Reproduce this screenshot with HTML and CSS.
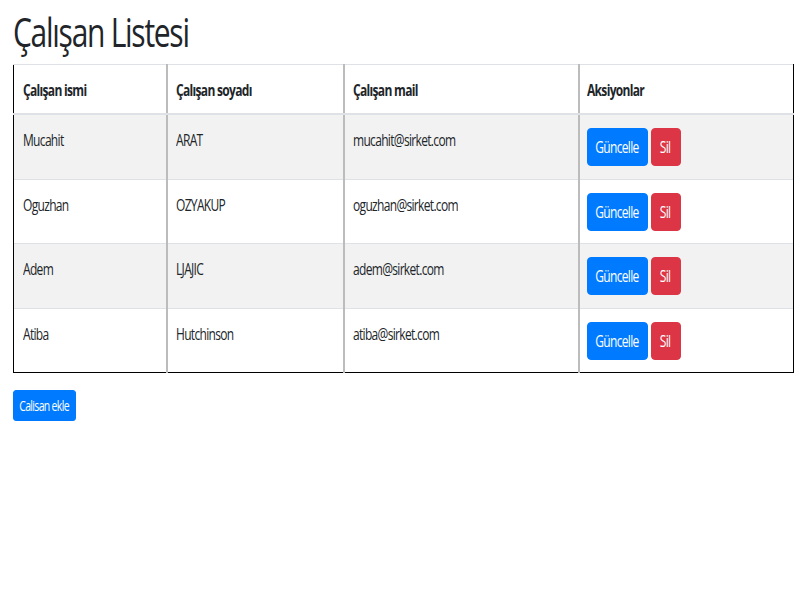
FILE: index.html
```html
<!DOCTYPE html>
<html lang="tr">
<head>
<meta charset="utf-8">
<title>Çalışan Listesi</title>
<link rel="stylesheet" href="styles.css">
</head>
<body>
<div class="page">
  <h1 class="title"><span class="sq">Çalışan Listesi</span></h1>
  <table class="emp-table">
    <colgroup>
      <col class="c1"><col class="c2"><col class="c3"><col class="c4">
    </colgroup>
    <thead>
      <tr><th><span class="sq">Çalışan ismi</span></th><th><span class="sq">Çalışan soyadı</span></th><th><span class="sq">Çalışan mail</span></th><th><span class="sq">Aksiyonlar</span></th></tr>
    </thead>
    <tbody>
      <tr class="odd"><td><span class="sq">Mucahit</span></td><td><span class="sq">ARAT</span></td><td><span class="sq">mucahit@sirket.com</span></td><td><div class="actions"><button class="btn btn-primary btn-update"><span class="sq">Güncelle</span></button><button class="btn btn-danger btn-delete"><span class="sq">Sil</span></button></div></td></tr>
      <tr><td><span class="sq">Oguzhan</span></td><td><span class="sq">OZYAKUP</span></td><td><span class="sq">oguzhan@sirket.com</span></td><td><div class="actions"><button class="btn btn-primary btn-update"><span class="sq">Güncelle</span></button><button class="btn btn-danger btn-delete"><span class="sq">Sil</span></button></div></td></tr>
      <tr class="odd"><td><span class="sq">Adem</span></td><td><span class="sq">LJAJIC</span></td><td><span class="sq">adem@sirket.com</span></td><td><div class="actions"><button class="btn btn-primary btn-update"><span class="sq">Güncelle</span></button><button class="btn btn-danger btn-delete"><span class="sq">Sil</span></button></div></td></tr>
      <tr class="last"><td><span class="sq">Atiba</span></td><td><span class="sq">Hutchinson</span></td><td><span class="sq">atiba@sirket.com</span></td><td><div class="actions"><button class="btn btn-primary btn-update"><span class="sq">Güncelle</span></button><button class="btn btn-danger btn-delete"><span class="sq">Sil</span></button></div></td></tr>
    </tbody>
  </table>
  <button class="btn btn-primary btn-sm btn-add"><span class="sq">Calisan ekle</span></button>
</div>
</body>
</html>
```
FILE: styles.css
```css
html, body {
  margin: 0;
  padding: 0;
  background: #fff;
}
body {
  font-family: "Open Sans", "Liberation Sans", sans-serif;
  color: #212529;
  font-size: 16px;
  line-height: 1.5;
  letter-spacing: -0.9px;
}
/* Text in the reference is horizontally squeezed to 75% */
.sq {
  display: inline-block;
  white-space: nowrap;
  transform: scaleX(0.75);
  transform-origin: 0 50%;
}
.page {
  padding: 8px 7px 0 13px;
}
.title {
  margin: 0 0 8px 0;
  font-size: 40px;
  font-weight: 400;
  line-height: 48px;
  letter-spacing: -1.7px;
}
.emp-table {
  width: 780px;
  table-layout: fixed;
  border-collapse: collapse;
  margin-bottom: 17px;
}
.c1 { width: 153px; }
.c2 { width: 177px; }
.c3 { width: 235px; }
.c4 { width: 215px; }
.emp-table th,
.emp-table td {
  text-align: left;
  vertical-align: top;
  padding: 12px 8px;
  border-top: 1px solid #dee2e6;
  border-left: 2px solid #bcbcbc;
  border-right: 2px solid #bcbcbc;
  border-bottom: 0;
}
.emp-table th {
  font-weight: 700;
  border-bottom: 2px solid #dee2e6;
  padding-top: 13px;
  padding-bottom: 11px;
}
.emp-table td {
  padding-top: 13px;
  padding-bottom: 12.5px;
  height: 38px;
}
.emp-table th:first-child,
.emp-table td:first-child {
  border-left: 1px solid #000;
  padding-left: 9px;
}
.emp-table th:last-child,
.emp-table td:last-child {
  border-right: 1px solid #000;
  padding-left: 7px;
}
.emp-table tr.last td {
  border-bottom: 1px solid #000;
}
.emp-table tr.odd td {
  background: #f2f2f2;
}
.actions {
  display: flex;
  gap: 3px;
}
.btn {
  display: flex;
  justify-content: center;
  align-items: center;
  box-sizing: border-box;
  font-family: inherit;
  font-size: 16px;
  line-height: 24px;
  letter-spacing: -0.9px;
  height: 38px;
  padding: 0;
  border: 1px solid transparent;
  border-radius: 4px;
  color: #fff;
  cursor: pointer;
}
.btn .sq {
  transform-origin: 50% 50%;
}
.btn-update { width: 61px; }
.btn-delete { width: 30px; }
.btn-primary {
  background: #007bff;
  border-color: #007bff;
}
.btn-danger {
  background: #dc3545;
  border-color: #dc3545;
}
.btn-sm {
  font-size: 14px;
  line-height: 21px;
  height: 31px;
  border-radius: 3px;
}
.btn-add { width: 63px; }
```
